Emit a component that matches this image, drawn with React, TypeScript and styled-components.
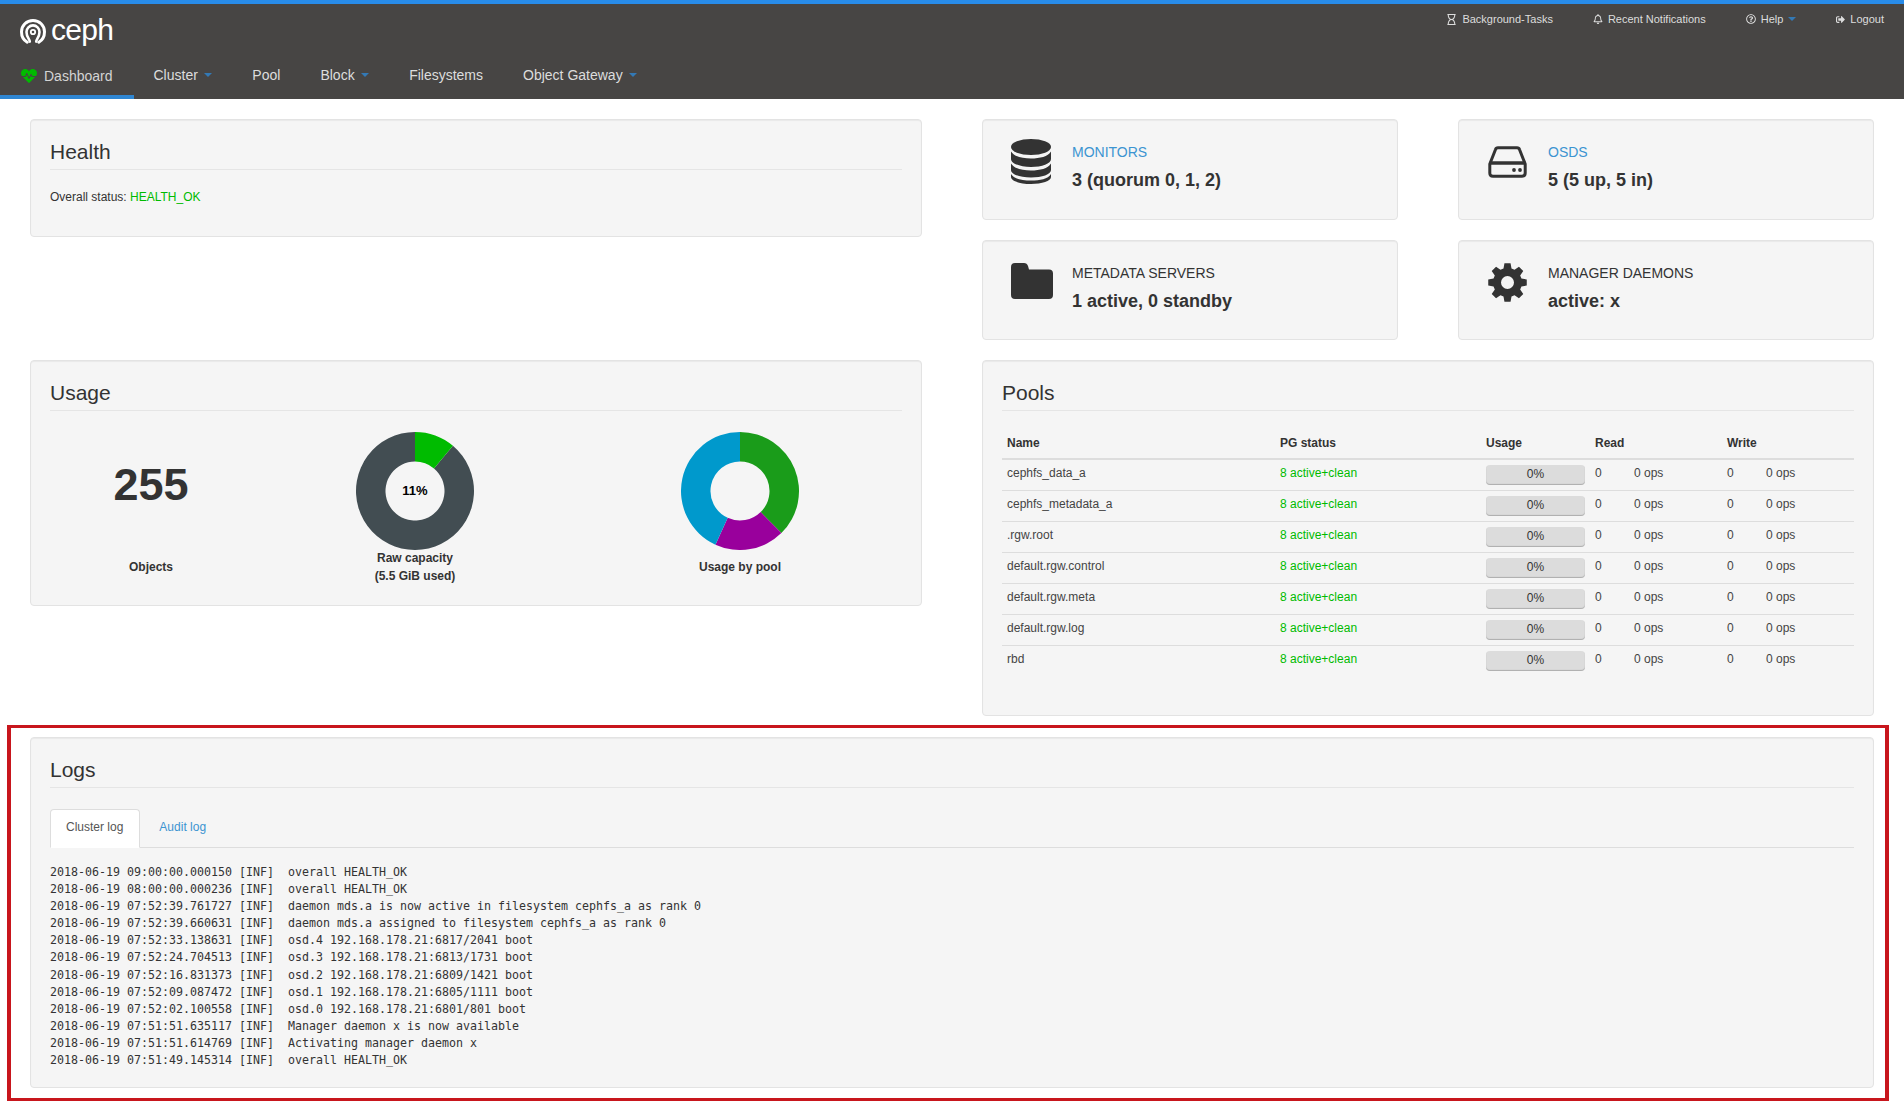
import React from "react";
import styled, { createGlobalStyle } from "styled-components";
import { FaHeartbeat, FaRegBell, FaRegHourglass, FaRegQuestionCircle, FaSignOutAlt } from "react-icons/fa";

const Global = createGlobalStyle`
  html, body { margin: 0; padding: 0; background: #fff; }
  body { font-family: "Liberation Sans", Arial, sans-serif; font-size: 12px; color: #333; }
`;

const Header = styled.header`
  box-sizing: border-box;
  height: 99px;
  background: #474544;
  border-top: 4px solid #288cea;
`;
const TopRow = styled.div`
  display: flex;
  justify-content: space-between;
  height: 49px;
`;
const Brand = styled.div`
  display: flex;
  align-items: flex-start;
  gap: 5px;
  padding: 15px 0 0 20px;
`;
const BrandName = styled.span`
  font-size: 30px;
  line-height: 22px;
  color: #fff;
  letter-spacing: -0.7px;
`;
const UtilityNav = styled.nav`
  display: flex;
  align-items: flex-start;
`;
const UtilityLink = styled.a`
  display: flex;
  align-items: center;
  gap: 5px;
  height: 30px;
  padding: 0 20px;
  font-size: 11px;
  color: #ddd;
  svg { flex: none; }
`;
const Caret = styled.i<{ $small?: boolean }>`
  display: inline-block;
  width: 0;
  height: 0;
  margin-left: ${p => (p.$small ? 0 : 1.5)}px;
  border-top: 4px solid #3379b5;
  border-left: 4px solid transparent;
  border-right: 4px solid transparent;
`;
const MainMenu = styled.nav`
  display: flex;
`;
const MenuLink = styled.a<{ $active?: boolean }>`
  box-sizing: border-box;
  display: flex;
  align-items: center;
  gap: 5px;
  height: 46px;
  padding: ${p => (p.$active ? "4px 21px 0 20px" : "2px 20px 0")};
  font-size: 14px;
  color: ${p => (p.$active ? "#d4d4d4" : "#ddd")};
  border-bottom: 4px solid ${p => (p.$active ? "#2f86d2" : "transparent")};
  svg { flex: none; margin-left: 1px; margin-right: 2px; }
`;

const Dashboard = styled.main`
  display: grid;
  grid-template-columns: 892px 416px 416px;
  grid-template-rows: 101px 100px auto;
  column-gap: 60px;
  row-gap: 20px;
  padding: 20px 0 9px 30px;
`;
const Well = styled.section`
  box-sizing: border-box;
  background: #f5f5f5;
  border: 1px solid #e3e3e3;
  border-radius: 4px;
  box-shadow: inset 0 1px 1px rgba(0, 0, 0, 0.05);
  padding: 19px;
`;
const HealthCard = styled(Well)`
  grid-column: 1;
  grid-row: 1 / span 2;
  align-self: start;
  height: 118px;
`;
const UsageCard = styled(Well)`
  grid-column: 1;
  grid-row: 3;
  align-self: start;
  height: 246px;
`;
const PoolsCard = styled(Well)`
  grid-column: 2 / span 2;
  grid-row: 3;
  height: 356px;
`;
const CardTitle = styled.h3`
  margin: 0;
  height: 30px;
  font-size: 21px;
  font-weight: 400;
  line-height: 26px;
  color: #333;
  border-bottom: 1px solid #e5e5e5;
`;
const StatusLine = styled.p`
  margin: 19px 0 0;
  line-height: 17px;
  font-size: 12px;
`;
const Ok = styled.span`
  color: #00bb00;
`;

const InfoCard = styled(Well)`
  display: flex;
  padding: 22px 0 0 28px;
`;
const InfoIcon = styled.div<{ $top: number; $left?: number }>`
  flex: none;
  box-sizing: border-box;
  width: 61px;
  margin-top: ${p => p.$top}px;
  padding-left: ${p => p.$left ?? 0}px;
  color: #333;
  svg { display: block; }
`;
const InfoLabel = styled.div<{ $link?: boolean }>`
  font-size: 14px;
  line-height: 20px;
  color: ${p => (p.$link ? "#3c94d1" : "#333")};
`;
const InfoValue = styled.div`
  margin-top: 6px;
  font-size: 18px;
  font-weight: 700;
  line-height: 24px;
  color: #333;
`;

const UsageGrid = styled.div`
  display: grid;
  grid-template-columns: 202px 326px 324px;
  margin-top: 21px;
`;
const Metric = styled.div`
  display: flex;
  flex-direction: column;
  align-items: center;
`;
const MetricVisual = styled.div`
  height: 117px;
  svg { display: block; }
`;
const BigNumber = styled.div`
  font-size: 45px;
  font-weight: 700;
  line-height: 106px;
  color: #333;
`;
const MetricLabel = styled.div`
  display: flex;
  align-items: center;
  min-height: 36px;
  font-size: 12px;
  font-weight: 700;
  line-height: 18px;
  text-align: center;
  color: #333;
`;

const PoolTable = styled.table`
  width: 852px;
  margin-top: 17px;
  table-layout: fixed;
  border-collapse: collapse;
`;
const HeadCell = styled.th<{ $w: number }>`
  box-sizing: border-box;
  width: ${p => p.$w}px;
  height: 31px;
  padding: 7px 5px 0;
  vertical-align: top;
  text-align: left;
  font-size: 12px;
  line-height: 17px;
  font-weight: 700;
  color: #333;
  border-bottom: 2px solid #ddd;
`;
const Row = styled.tr`
  & + & td { border-top: 1px solid #ddd; }
`;
const Cell = styled.td<{ $ok?: boolean }>`
  box-sizing: border-box;
  height: 31px;
  padding: 5px;
  vertical-align: top;
  font-size: 12px;
  line-height: 17px;
  color: ${p => (p.$ok ? "#00bb00" : "#444")};
`;
const Rate = styled.span`
  display: inline-block;
  width: 39px;
`;
const UsageBar = styled.div`
  height: 20px;
  width: 99px;
  border-radius: 4px;
  background: #dcdcdc;
  box-shadow: inset 0 -1px 1px rgba(0, 0, 0, 0.22);
  font-size: 12px;
  line-height: 19px;
  text-align: center;
  color: #333;
`;

const Highlight = styled.div`
  box-sizing: border-box;
  width: 1882px;
  margin-left: 7px;
  padding: 9px 11px 10px 19px;
  border-style: solid;
  border-color: #c8161d;
  border-width: 3px 4px;
`;
const LogsCard = styled(Well)`
  height: 351px;
`;
const TabBar = styled.div`
  display: flex;
  gap: 3px;
  margin-top: 21px;
  height: 38px;
  border-bottom: 1px solid #ddd;
`;
const Tab = styled.a<{ $active?: boolean }>`
  box-sizing: border-box;
  height: 39px;
  padding: 0 16px 0 15px;
  line-height: 34px;
  font-size: 12px;
  border: 1px solid ${p => (p.$active ? "#ddd" : "transparent")};
  border-bottom-color: ${p => (p.$active ? "#fff" : "transparent")};
  border-radius: 4px 4px 0 0;
  background: ${p => (p.$active ? "#fff" : "transparent")};
  color: ${p => (p.$active ? "#555" : "#3c94d1")};
`;
const LogText = styled.pre`
  margin: 16px 0 0;
  font-family: "DejaVu Sans Mono", "Liberation Mono", monospace;
  font-size: 11.63px;
  line-height: 17.1px;
  color: #333;
`;

function polar(r: number, deg: number) {
  const a = ((deg - 90) * Math.PI) / 180;
  return [59 + r * Math.cos(a), 59 + r * Math.sin(a)];
}
function slice(from: number, to: number) {
  const [x1, y1] = polar(59, from);
  const [x2, y2] = polar(59, to);
  const [x3, y3] = polar(29.5, to);
  const [x4, y4] = polar(29.5, from);
  const large = to - from > 180 ? 1 : 0;
  return `M${x1} ${y1}A59 59 0 ${large} 1 ${x2} ${y2}L${x3} ${y3}A29.5 29.5 0 ${large} 0 ${x4} ${y4}Z`;
}

const CenterText = styled.text`
  font-family: "Liberation Sans", Arial, sans-serif;
  font-size: 13px;
  font-weight: 700;
  fill: #000;
`;

function Donut({ parts, center }: { parts: [number, number, string][]; center?: string }) {
  return (
    <svg width="118" height="118" viewBox="0 0 118 118">
      {parts.map(([a, b, c]) => (
        <path key={c} d={slice(a, b)} fill={c} />
      ))}
      {center && (
        <CenterText x="59" y="63" textAnchor="middle">
          {center}
        </CenterText>
      )}
    </svg>
  );
}

const Logo = () => (
  <svg width="26" height="25" viewBox="0 0 26 25" fill="none" stroke="#fff" strokeLinecap="round">
    <path d="M7.2 23.3C3.6 21.2 1.5 17.2 1.5 12.8 1.5 6.4 6.6 1.5 13 1.5s11.5 4.9 11.5 11.3c0 4.4-2.1 8.4-5.7 10.5" strokeWidth="3" />
    <path d="M9.8 22.6C9.8 20.2 6.5 18.2 6.5 13 6.5 9.3 9.4 6.4 13 6.4s6.5 2.9 6.5 6.6c0 5.2-3.3 7.2-3.3 9.6" strokeWidth="2.6" />
    <circle cx="13" cy="13" r="2.2" strokeWidth="1.8" />
  </svg>
);
const DatabaseIcon = () => (
  <svg width="40" height="45" viewBox="0 0 40 45" fill="currentColor">
    <ellipse cx="20" cy="8" rx="20" ry="8" />
    <path d="M0 12.5C3 17.5 11 19.5 20 19.5s17-2 20-7V20c0 4.5-9 8-20 8S0 24.5 0 20Z" />
    <path d="M0 24.5C3 29.5 11 31.5 20 31.5s17-2 20-7V31c0 4.5-9 7.5-20 7.5S0 35.5 0 31Z" />
    <path d="M0 35C3 40 11 41.5 20 41.5S37 40 40 35v3c0 4-9 7-20 7S0 42 0 38Z" />
  </svg>
);
const HddIcon = () => (
  <svg width="39" height="32" viewBox="0 0 39 32" fill="none" stroke="currentColor" strokeWidth="3">
    <path d="M1.8 18 7.5 3.5Q8 1.8 10 1.8H29Q31 1.8 31.5 3.5L37.2 18V27Q37.2 30.2 34 30.2H5Q1.8 30.2 1.8 27Z" strokeLinejoin="round" />
    <path d="M1.8 17H37.2" strokeWidth="3.6" />
    <circle cx="26" cy="24" r="1.9" fill="currentColor" stroke="none" />
    <circle cx="32" cy="24" r="1.9" fill="currentColor" stroke="none" />
  </svg>
);
const FolderIcon = () => (
  <svg width="42" height="36" viewBox="0 0 42 36" fill="currentColor">
    <path d="M4 0H13Q16 0 17 3L18 6.5H38Q42 6.5 42 10.5V32Q42 36 38 36H4Q0 36 0 32V4Q0 0 4 0Z" />
  </svg>
);
const gearPath = () => {
  let d = "";
  for (let i = 0; i < 8; i++) {
    const c = i * 45;
    const pts: [number, number][] = [
      [14.5, c - 16],
      [19.5, c - 9],
      [19.5, c + 9],
      [14.5, c + 16],
    ];
    pts.forEach(([r, deg]) => {
      const a = ((deg - 90) * Math.PI) / 180;
      d += `${d ? "L" : "M"}${(19.5 + r * Math.cos(a)).toFixed(2)} ${(19.5 + r * Math.sin(a)).toFixed(2)}`;
    });
  }
  return `${d}ZM19.5 13a6.5 6.5 0 1 0 0 13a6.5 6.5 0 1 0 0-13Z`;
};
const CogIcon = () => (
  <svg width="39" height="39" viewBox="0 0 39 39" fill="currentColor">
    <path fillRule="evenodd" d={gearPath()} />
  </svg>
);

const pools = ["cephfs_data_a", "cephfs_metadata_a", ".rgw.root", "default.rgw.control", "default.rgw.meta", "default.rgw.log", "rbd"];
const columns: [string, number][] = [["Name", 273], ["PG status", 206], ["Usage", 109], ["Read", 132], ["Write", 132]];

const logLines = `2018-06-19 09:00:00.000150 [INF]  overall HEALTH_OK
2018-06-19 08:00:00.000236 [INF]  overall HEALTH_OK
2018-06-19 07:52:39.761727 [INF]  daemon mds.a is now active in filesystem cephfs_a as rank 0
2018-06-19 07:52:39.660631 [INF]  daemon mds.a assigned to filesystem cephfs_a as rank 0
2018-06-19 07:52:33.138631 [INF]  osd.4 192.168.178.21:6817/2041 boot
2018-06-19 07:52:24.704513 [INF]  osd.3 192.168.178.21:6813/1731 boot
2018-06-19 07:52:16.831373 [INF]  osd.2 192.168.178.21:6809/1421 boot
2018-06-19 07:52:09.087472 [INF]  osd.1 192.168.178.21:6805/1111 boot
2018-06-19 07:52:02.100558 [INF]  osd.0 192.168.178.21:6801/801 boot
2018-06-19 07:51:51.635117 [INF]  Manager daemon x is now available
2018-06-19 07:51:51.614769 [INF]  Activating manager daemon x
2018-06-19 07:51:49.145314 [INF]  overall HEALTH_OK`;

export default function App() {
  return (
    <>
      <Global />
      <Header>
        <TopRow>
          <Brand>
            <Logo />
            <BrandName>ceph</BrandName>
          </Brand>
          <UtilityNav>
            <UtilityLink><FaRegHourglass size={11} />Background-Tasks</UtilityLink>
            <UtilityLink><FaRegBell size={10} />Recent Notifications</UtilityLink>
            <UtilityLink><FaRegQuestionCircle size={10} />Help <Caret $small /></UtilityLink>
            <UtilityLink><FaSignOutAlt size={9} />Logout</UtilityLink>
          </UtilityNav>
        </TopRow>
        <MainMenu>
          <MenuLink $active><FaHeartbeat size={16} color="#00bb00" />Dashboard</MenuLink>
          <MenuLink>Cluster <Caret /></MenuLink>
          <MenuLink>Pool</MenuLink>
          <MenuLink>Block <Caret /></MenuLink>
          <MenuLink>Filesystems</MenuLink>
          <MenuLink>Object Gateway <Caret /></MenuLink>
        </MainMenu>
      </Header>

      <Dashboard>
        <HealthCard>
          <CardTitle>Health</CardTitle>
          <StatusLine>Overall status: <Ok>HEALTH_OK</Ok></StatusLine>
        </HealthCard>
        <InfoCard>
          <InfoIcon $top={-3}><DatabaseIcon /></InfoIcon>
          <div>
            <InfoLabel $link>MONITORS</InfoLabel>
            <InfoValue>3 (quorum 0, 1, 2)</InfoValue>
          </div>
        </InfoCard>
        <InfoCard>
          <InfoIcon $top={4} $left={1}><HddIcon /></InfoIcon>
          <div>
            <InfoLabel $link>OSDS</InfoLabel>
            <InfoValue>5 (5 up, 5 in)</InfoValue>
          </div>
        </InfoCard>
        <InfoCard>
          <InfoIcon $top={0}><FolderIcon /></InfoIcon>
          <div>
            <InfoLabel>METADATA SERVERS</InfoLabel>
            <InfoValue>1 active, 0 standby</InfoValue>
          </div>
        </InfoCard>
        <InfoCard>
          <InfoIcon $top={0} $left={1}><CogIcon /></InfoIcon>
          <div>
            <InfoLabel>MANAGER DAEMONS</InfoLabel>
            <InfoValue>active: x</InfoValue>
          </div>
        </InfoCard>

        <UsageCard>
          <CardTitle>Usage</CardTitle>
          <UsageGrid>
            <Metric>
              <MetricVisual><BigNumber>255</BigNumber></MetricVisual>
              <MetricLabel>Objects</MetricLabel>
            </Metric>
            <Metric>
              <MetricVisual>
                <Donut center="11%" parts={[[40, 360, "#424d52"], [0, 40, "#00bb00"]]} />
              </MetricVisual>
              <MetricLabel>Raw capacity<br />(5.5 GiB used)</MetricLabel>
            </Metric>
            <Metric>
              <MetricVisual>
                <Donut parts={[[0, 135.5, "#1a9c1a"], [135.5, 204.6, "#99009c"], [204.6, 360, "#0099cc"]]} />
              </MetricVisual>
              <MetricLabel>Usage by pool</MetricLabel>
            </Metric>
          </UsageGrid>
        </UsageCard>

        <PoolsCard>
          <CardTitle>Pools</CardTitle>
          <PoolTable>
            <thead>
              <tr>
                {columns.map(([name, w]) => (
                  <HeadCell key={name} $w={w}>{name}</HeadCell>
                ))}
              </tr>
            </thead>
            <tbody>
              {pools.map(pool => (
                <Row key={pool}>
                  <Cell>{pool}</Cell>
                  <Cell $ok>8 active+clean</Cell>
                  <Cell><UsageBar>0%</UsageBar></Cell>
                  <Cell><Rate>0</Rate>0 ops</Cell>
                  <Cell><Rate>0</Rate>0 ops</Cell>
                </Row>
              ))}
            </tbody>
          </PoolTable>
        </PoolsCard>
      </Dashboard>

      <Highlight>
        <LogsCard>
          <CardTitle>Logs</CardTitle>
          <TabBar>
            <Tab $active>Cluster log</Tab>
            <Tab>Audit log</Tab>
          </TabBar>
          <LogText>{logLines}</LogText>
        </LogsCard>
      </Highlight>
    </>
  );
}
